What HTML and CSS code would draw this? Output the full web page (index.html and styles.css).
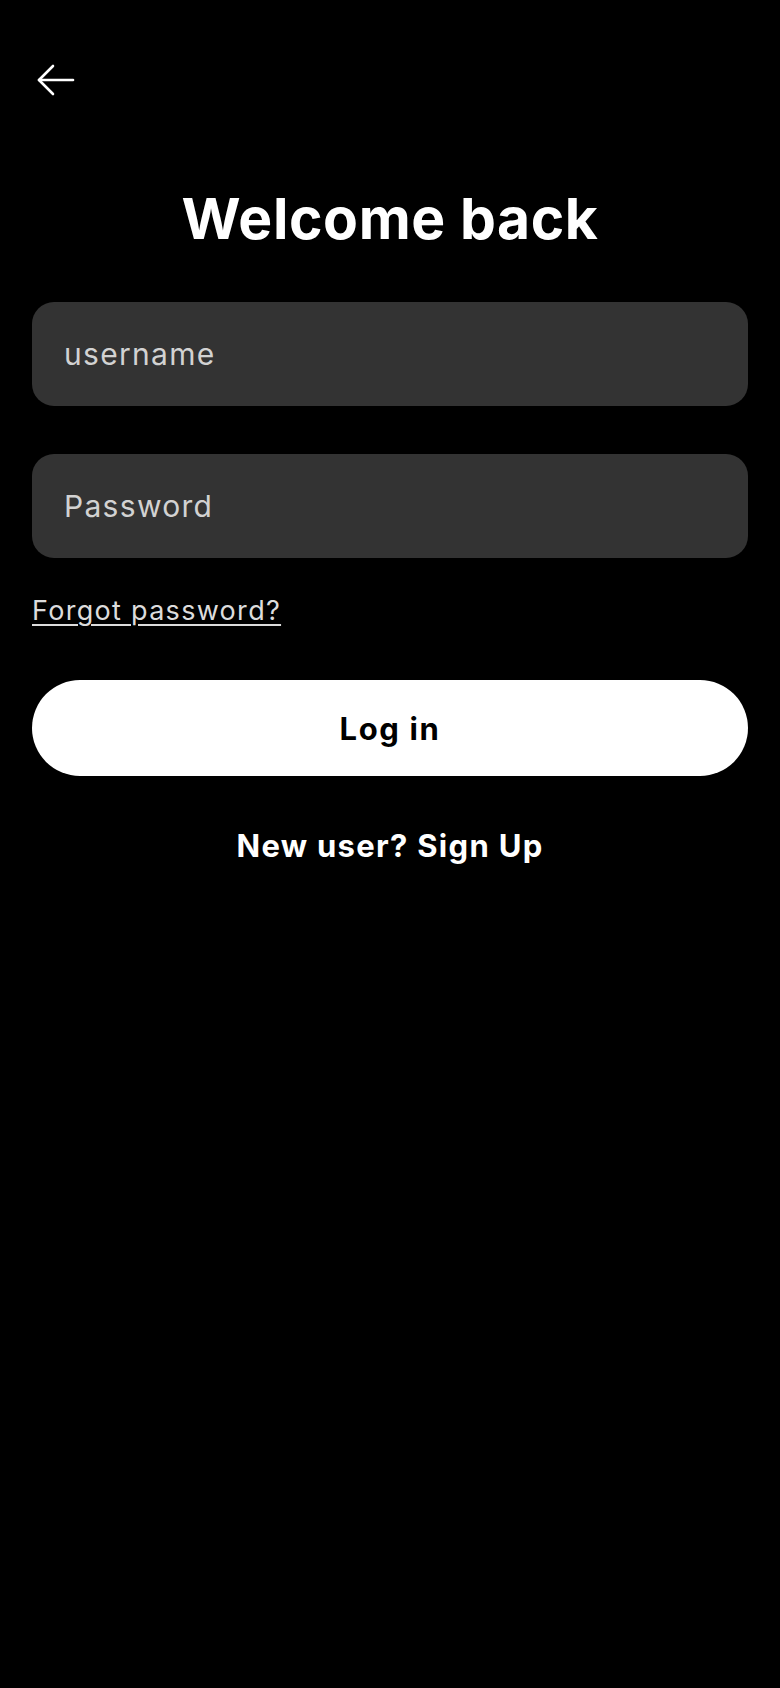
FILE: index.html
```html
<!DOCTYPE html>
<html lang="en">
<head>
<meta charset="utf-8">
<title>Welcome back</title>
<link rel="stylesheet" href="styles.css">
</head>
<body>
<div class="screen">
  <header class="topbar">
    <button class="back" aria-label="Back">
      <svg width="38" height="32" viewBox="0 0 38 32" fill="none" stroke="#fff" stroke-width="2.6" stroke-linecap="round" stroke-linejoin="round">
        <path d="M2 16 H36"/>
        <path d="M16 2 L2 16 L16 30"/>
      </svg>
    </button>
  </header>
  <h1 class="title">Welcome back</h1>
  <form class="form">
    <input class="field" type="text" placeholder="username">
    <input class="field" type="password" placeholder="Password">
    <a class="forgot" href="#">Forgot password?</a>
    <button class="login" type="button">Log in</button>
    <p class="signup">New user? Sign Up</p>
  </form>
</div>
</body>
</html>
```

FILE: styles.css
```css
html, body {
  margin: 0;
  padding: 0;
  background: #000;
}
body {
  font-family: Inter, "Noto Sans", "Liberation Sans", sans-serif;
  color: #fff;
}
.screen {
  padding: 0 32px;
  display: flex;
  flex-direction: column;
}
.topbar {
  height: 140px;
  display: flex;
  align-items: flex-start;
  padding-top: 64px;
  box-sizing: border-box;
}
.back {
  background: none;
  border: 0;
  padding: 0;
  margin-left: 5px;
  width: 38px;
  height: 32px;
  display: block;
}
.back svg { display: block; }
.title {
  margin: 44px 0 0;
  text-align: center;
  font-size: 57px;
  font-weight: 700;
  line-height: 70px;
  letter-spacing: 0.6px;
}
.form {
  display: flex;
  flex-direction: column;
  margin-top: 48px;
}
.field {
  height: 104px;
  border: 0;
  border-radius: 22px;
  background: #333333;
  color: #fff;
  font-family: inherit;
  font-size: 30px;
  letter-spacing: 1.3px;
  padding: 0 32px;
  box-sizing: border-box;
  outline: none;
}
.field + .field { margin-top: 48px; }
.field::placeholder { color: #d2d2d2; }
.forgot {
  margin-top: 35px;
  align-self: flex-start;
  color: #dcdcdc;
  font-size: 27px;
  letter-spacing: 1.3px;
  line-height: 36px;
  text-decoration: underline;
  text-underline-offset: 4px;
  text-decoration-thickness: 2px;
}
.login {
  margin-top: 51px;
  height: 96px;
  border: 0;
  border-radius: 48px;
  background: #fff;
  color: #000;
  font-family: inherit;
  font-size: 31px;
  font-weight: 700;
  letter-spacing: 1.6px;
}
.signup {
  margin: 50px 0 0;
  text-align: center;
  font-size: 31px;
  font-weight: 700;
  letter-spacing: 1.3px;
  line-height: 40px;
}
```
